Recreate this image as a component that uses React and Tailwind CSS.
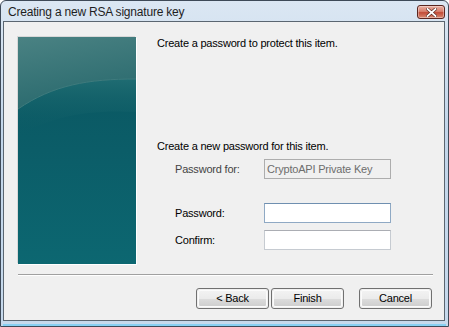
import React from "react";

const font = { fontFamily: '"Liberation Sans", Arial, sans-serif' };

const Banner = () => (
  <svg width="118" height="227" viewBox="0 0 118 227" className="block">
    <defs>
      <linearGradient id="low" x1="0" y1="0" x2="0" y2="1">
        <stop offset="0" stopColor="#0a555f" />
        <stop offset="0.5" stopColor="#0b5d68" />
        <stop offset="1" stopColor="#0c6771" />
      </linearGradient>
      <linearGradient id="top" x1="0" y1="0" x2="0.3" y2="1">
        <stop offset="0" stopColor="#4a8283" />
        <stop offset="1" stopColor="#2a6a6e" />
      </linearGradient>
      <linearGradient id="glow" x1="0" y1="0" x2="0" y2="1">
        <stop offset="0" stopColor="#1f6c72" />
        <stop offset="1" stopColor="#0b5a64" stopOpacity="0" />
      </linearGradient>
    </defs>
    <rect width="118" height="227" fill="url(#low)" />
    <path d="M0 72 C 35 48, 70 42, 118 42 V 75 C 70 72, 30 80, 0 100 Z" fill="url(#glow)" />
    <path d="M0 0 H118 V42 C 70 42, 35 48, 0 72 Z" fill="url(#top)" />
    <path d="M0 72 C 35 48, 70 42, 118 42" fill="none" stroke="#3f7b7d" strokeWidth="1" />
  </svg>
);

const Btn = ({ children, className = "" }) => (
  <button
    className={`h-[21px] w-[73px] rounded-[3px] border border-[#707070] p-[1px] text-[11px] tracking-[-0.2px] text-black ${className}`}
    style={font}
  >
    <div className="flex h-full w-full items-center justify-center rounded-[2px] border border-[#fbfbfb] bg-[linear-gradient(#f2f2f2_0%,#ebebeb_50%,#dddddd_50%,#cfcfcf_100%)]">
      {children}
    </div>
  </button>
);

export default function App() {
  return (
    <div
      className="flex h-[327px] w-[449px] flex-col overflow-hidden rounded-t-[6px] border border-[#3e4a58] bg-[linear-gradient(#dbe7f3,#c2d6ea_40%,#c6d9ec)]"
      style={font}
    >
      {/* title bar */}
      <div className="flex h-[20px] shrink-0 items-center justify-between pl-[7px] pr-[3px]">
        <span className="pt-[1px] text-[12px] tracking-[-0.2px] text-[#1e1e1e]">
          Creating a new RSA signature key
        </span>
        <div className="mt-[2px] flex h-[14px] w-[28px] items-center justify-center rounded-[3px] border border-[#5a2620] bg-[linear-gradient(#eab1a4,#d8806e_45%,#c24c38_55%,#d98a72)] shadow-[inset_0_0_0_1px_rgba(255,255,255,0.35)]">
          <svg width="11" height="9" viewBox="0 0 11 9">
            <path d="M1.5 1 L9.5 8 M9.5 1 L1.5 8" stroke="#5a2a22" strokeWidth="3.2" strokeLinecap="square" />
            <path d="M1.5 1 L9.5 8 M9.5 1 L1.5 8" stroke="#ffffff" strokeWidth="1.8" strokeLinecap="square" />
          </svg>
        </div>
      </div>

      {/* client area */}
      <div className="ml-[2px] mr-[3px] mb-[3px] flex-1 border border-[#5b6671] bg-[#f0f0f0]">
        <div className="flex pl-[14px] pt-[15px]">
          <div className="shadow-[1px_1px_0_#ffffff,-1px_-1px_0_#d8d8d8]">
            <Banner />
          </div>
          <div className="ml-[21px] flex flex-col text-[11px] leading-[13px] tracking-[-0.2px] text-black">
            <div>Create a password to protect this item.</div>
            <div className="mt-[90px]">Create a new password for this item.</div>
            <div className="mt-[6px] flex items-center">
              <span className="w-[107px] pl-[18px] text-[#444]">Password for:</span>
              <div className="flex h-[20px] w-[127px] items-center border border-[#adadad] bg-[#f0f0f0] px-[2px] text-[#6d6d6d]">
                CryptoAPI Private Key
              </div>
            </div>
            <div className="mt-[24px] flex items-center">
              <span className="w-[107px] pl-[18px]">Password:</span>
              <div className="h-[20px] w-[127px] border border-[#8fa9c4] border-t-[#6f8fb0] bg-white" />
            </div>
            <div className="mt-[7px] flex items-center">
              <span className="w-[107px] pl-[18px]">Confirm:</span>
              <div className="h-[20px] w-[127px] border border-[#c6cbd1] border-t-[#abadb3] bg-white" />
            </div>
          </div>
        </div>

        <div className="ml-[14px] mr-[11px] mt-[10px] border-t border-b border-t-[#a0a0a0] border-b-[#ffffff]" />

        <div className="mr-[12px] mt-[12px] flex justify-end">
          <Btn>&lt; Back</Btn>
          <Btn className="ml-[2px]">Finish</Btn>
          <Btn className="ml-[15px]">Cancel</Btn>
        </div>
      </div>
      <div className="mx-[2px] h-[2px] shrink-0 bg-[#88d0f2]" />
    </div>
  );
}
